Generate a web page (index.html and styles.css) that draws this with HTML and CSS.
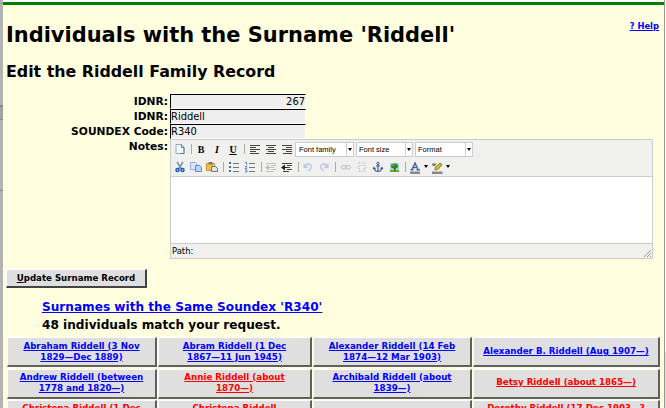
FILE: index.html
```html
<!DOCTYPE html>
<html lang="en">
<head>
<meta charset="utf-8">
<title>Individuals with the Surname 'Riddell'</title>
<link rel="stylesheet" href="styles.css">
</head>
<body>
<div class="edge left"></div>
<main class="page">
<header class="top"><h1>Individuals with the Surname 'Riddell'</h1><a class="help" href="#">? Help</a></header>
<h2>Edit the Riddell Family Record</h2>
<form>
<div class="row"><label>IDNR:</label><span class="field num">267</span></div>
<div class="row"><label>IDNR:</label><span class="field">Riddell</span></div>
<div class="row"><label>SOUNDEX Code:</label><span class="field">R340</span></div>
<div class="row notes"><label>Notes:</label>
<div class="editor">
<div class="bar">
<svg class="i" viewBox="0 0 16 16"><path d="M4 3.500h5.500l2.500 2.500v6.500h-8z" fill="#f8fbff" stroke="#91a9cc"/><path d="M9.500 3.500v3h2.500v6h-4" fill="none" stroke="#5878a8"/></svg>
<i class="sep"></i>
<b class="i fmt">B</b><b class="i fmt it">I</b><b class="i fmt un">U</b>
<i class="sep wide"></i>
<svg class="i" viewBox="0 0 16 16"><path d="M3 4.500h10M3 6.500h6M3 8.500h10M3 10.500h6M3 12.500h9" stroke="#444"/></svg>
<svg class="i" viewBox="0 0 16 16"><path d="M3 4.500h10M5 6.500h6M3 8.500h10M5 10.500h6M3 12.500h10" stroke="#444"/></svg>
<svg class="i" viewBox="0 0 16 16"><path d="M3 4.500h10M7 6.500h6M3 8.500h10M7 10.500h6M4 12.500h9" stroke="#444"/></svg>
<span class="sel s1"><span>Font family</span><i class="arr"></i></span><span class="sel"><span>Font size</span><i class="arr"></i></span><span class="sel"><span>Format</span><i class="arr"></i></span>
</div>
<div class="bar">
<svg class="i" viewBox="0 0 16 16"><path d="M5 3l4.500 7M11 3l-4.500 7" stroke="#7891b4" stroke-width="1.500"/><circle cx="5.500" cy="11" r="1.500" fill="none" stroke="#2457b8" stroke-width="1.500"/><circle cx="10.500" cy="11" r="1.500" fill="none" stroke="#2457b8" stroke-width="1.500"/></svg>
<svg class="i" viewBox="0 0 16 16"><path d="M2.500 3.500h5l2 2v5h-7z" fill="#d8e7fd" stroke="#8eace0"/><path d="M7.500 6.500h4l2 2v4h-6z" fill="#bcd3fa" stroke="#5d89d5"/></svg>
<svg class="i" viewBox="0 0 16 16"><path d="M2.500 4.500h8v7h-8z" fill="#f0c33e" stroke="#c89728"/><path d="M4.500 3h4v2.500h-4z" fill="#777"/><path d="M7.500 7.500h4l2 2v3h-6z" fill="#dce4ee" stroke="#687890"/></svg>
<i class="sep wide"></i>
<svg class="i" viewBox="0 0 16 16"><path d="M3 3h2v2H3zM3 7h2v2H3zM3 11h2v2H3z" fill="#3c6cc0"/><path d="M7 4.500h6M7 8.500h6M7 12.500h6" stroke="#777"/></svg>
<svg class="i" viewBox="0 0 16 16"><path d="M3 3.500h1.500v2.500M3 7.500h2l-2 2h2M3 11h2v2H3" fill="none" stroke="#5c87cd"/><path d="M7 4.500h6M7 8.500h6M7 12.500h6" stroke="#777"/></svg>
<i class="sep"></i>
<svg class="i faint" viewBox="0 0 16 16"><path d="M3 4.500h10M8 6.500h5M8 8.500h3M8 10.500h5M3 12.500h8" stroke="#555"/><path d="M6 5.500v6l-4-3zM5 8h3v1H5z" fill="#555"/></svg>
<svg class="i" viewBox="0 0 16 16"><path d="M3 4.500h10M8 6.500h5M8 8.500h3M8 10.500h5M4 12.500h6" stroke="#444"/><path d="M6 5.500v6l-4-3zM5 8h3v1H5z" fill="#222"/></svg>
<i class="sep"></i>
<svg class="i" viewBox="0 0 16 16"><path d="M5 7c3-4 7-1.500 6 1.500L9 12" fill="none" stroke="#b9c9e5" stroke-width="1.500"/><path d="M3.500 4v5h5z" fill="#b9c9e5"/></svg>
<svg class="i" viewBox="0 0 16 16"><path d="M11 7C8 3 4 5.500 5 8.500L7 12" fill="none" stroke="#b9c9e5" stroke-width="1.500"/><path d="M12.500 4v5h-5z" fill="#b9c9e5"/></svg>
<i class="sep wide"></i>
<svg class="i" viewBox="0 0 16 16"><rect x="3.500" y="6.500" width="5" height="3.500" rx="1.700" fill="none" stroke="#bfc3cb"/><rect x="7.500" y="6.500" width="5" height="3.500" rx="1.700" fill="none" stroke="#bfc3cb"/></svg>
<svg class="i" viewBox="0 0 16 16"><path d="M7 6.500H5q-2 1.800 0 3.500h1M9 6.500h2q2 1.800 0 3.500H9M5 3l1 2M8 2.500v2M11 3l-1 2M5 13l1-2M8 13.500v-2M11 13l-1-2" fill="none" stroke="#c5c8ce"/></svg>
<svg class="i" viewBox="0 0 16 16"><circle cx="8" cy="4.500" r="1.200" fill="none" stroke="#435f91"/><path d="M8 5.500v7M6 7h4M4 9c.5 2.500 2 3.500 4 3.500s3.500-1 4-3.500M3.200 10l.8-1.500 1.500 1.500M10.500 10l1.500-1.500.8 1.500" fill="none" stroke="#435f91" stroke-width="1.200"/></svg>
<svg class="i" viewBox="0 0 16 16"><path d="M4 4h9v8H4z" fill="#a9d4ee"/><path d="M4 11h9v2H4z" fill="#54b530"/><ellipse cx="8.500" cy="7" rx="3.500" ry="2.600" fill="#268a20"/><path d="M6 5.500h3v1.500H6z" fill="#54b530"/><path d="M8 8.500h1.500v3.500H8z" fill="#7b4a1b"/></svg>
<i class="sep"></i>
<svg class="i" viewBox="0 0 16 16"><path d="M5 10.500L8 4l3 6.500M5.500 8.500h5M3.500 10.700h3M9.500 10.700h3.500" fill="none" stroke="#4868a0" stroke-width="1.500"/><path d="M3 12.500h10V15H3z" fill="#888"/></svg><i class="drop"></i>
<svg class="i" viewBox="0 0 16 16"><path d="M3 4.500h4.500L6 7H3.500z" fill="#777"/><path d="M6 8.500L11 4l2 1.500L9.500 10l-3.500 1z" fill="#d8bd22" stroke="#6f6b3c" stroke-width=".8"/><path d="M3 12.500h10.500V15H3z" fill="#888"/></svg><i class="drop"></i>
</div>
<div class="area"></div>
<div class="path"><span>Path:</span><svg class="grip" viewBox="0 0 9 9"><path d="M1 8l7-7M4 8l4-4M7 8l1-1" stroke="#999"/></svg></div>
</div>
</div>
<button type="button"><span><u>U</u>pdate Surname Record</span></button>
</form>
<section class="summary"><a href="#">Surnames with the Same Soundex 'R340'</a><p>48 individuals match your request.</p></section>
<div class="people">
<div><a href="#">Abraham Riddell (3 Nov<br>1829—Dec 1889)</a></div>
<div><a href="#">Abram Riddell (1 Dec<br>1867—11 Jun 1945)</a></div>
<div><a href="#">Alexander Riddell (14 Feb<br>1874—12 Mar 1903)</a></div>
<div><a href="#">Alexander B. Riddell (Aug 1907—)</a></div>
<div><a href="#">Andrew Riddell (between<br>1778 and 1820—)</a></div>
<div><a href="#" class="f">Annie Riddell (about<br>1870—)</a></div>
<div><a href="#">Archibald Riddell (about<br>1839—)</a></div>
<div><a href="#" class="f">Betsy Riddell (about 1865—)</a></div>
<div><a href="#" class="f">Christena Riddell (1 Dec</a></div>
<div><a href="#" class="f">Christena Riddell</a></div>
<div></div>
<div><a href="#" class="f">Dorothy Riddell (17 Dec 1903—?</a></div>
</div>
</main>
<div class="edge right"></div>
</body>
</html>
```
FILE: styles.css
```css
*{box-sizing:border-box}
body{margin:0;width:666px;height:408px;overflow:hidden;display:flex;background:#fff;font:bold 12px/15px "DejaVu Sans",sans-serif;color:#000}
.edge{height:408px;background:#b3b3b3}
.left{width:3px;background:linear-gradient(#b3b3b3 0 3px,#999 3px 4px,#b3b3b3 4px 105px,#888 105px 107px,#a3a3a3 107px 119px,#888 119px 120px,#b3b3b3 120px 190px,#888 190px 191px,#b3b3b3 191px)}
.right{width:2px;border-left:1px solid #999;background:linear-gradient(#fff 0 352px,#ddd 352px)}
.page{width:661px;height:406px;margin-top:2px;border-top:3px solid green;background:#ffffe0;padding-left:3px;overflow:hidden}
a{color:#00f}
.top{display:flex;justify-content:space-between;height:51px;padding:15px 5px 0 0}
h1{margin:0;font-size:20.95px;line-height:30px;white-space:nowrap}
.help{font-size:8.4px;line-height:15px;margin-top:-1px}
h2{margin:6px 0 0;font-size:15.85px;line-height:20px;height:32px}
.row{display:flex;height:15px}
label{width:162px;text-align:right;margin-right:2px;font-size:10.7px}
.field{width:136px;height:15px;background:#efefef;border:1px solid;border-color:#000 #fff #fff #000;font:11px/14px "DejaVu Sans Condensed","DejaVu Sans",sans-serif}
.num{text-align:right}
.notes{height:120px}
.editor{width:483px;height:120px;border:1px solid #ccc;background:#f0f0ee;display:flex;flex-direction:column}
.bar{display:flex;height:18px;padding-left:1px;align-items:center}
.bar+.bar{height:19px;padding-bottom:1px;border-bottom:1px solid #ccc}
.i{width:16px;height:16px;flex:none;display:block}
.faint{opacity:.3}
.fmt{font:bold 10px/17px "Liberation Serif",serif;text-align:center}
.it{font-style:italic}
.un{text-decoration:underline}
.sep{width:5px;height:10px;flex:none;background:linear-gradient(90deg,transparent 3px,#aaa 3px 4px,transparent 4px)}
.wide{width:6px}
.sel{width:57px;height:15px;margin-left:2px;border:1px solid #ccc;background:#fff;display:flex;font:7.5px/13px "Liberation Sans",sans-serif;padding-left:2px;justify-content:space-between;white-space:nowrap}
.s1{width:59px;margin-left:0;padding-left:3px}
.sel:last-child{width:58px}
.arr{width:7px;border-left:1px solid #ccc;padding:5px 0 0 .5px}
.arr:before,.drop:before{content:"";display:block;width:0;border:solid transparent;border-width:3px 2.5px 0;border-top-color:#000}
.drop{width:6px;padding-left:1px}
.area{height:67px;background:#fff;border-bottom:1px solid #ccc;flex:none}
.path{height:14px;display:flex;justify-content:space-between;font:9.4px/14px "DejaVu Sans Condensed","DejaVu Sans",sans-serif;padding-left:1px}
.grip{width:9px;height:9px;margin-top:5px}
button{display:block;width:141px;height:19px;margin:10px 0 0;padding:0;border:solid;border-width:1px 2px 2px 1px;border-color:#fff #444 #444 #fff;background:#dfdfdf;color:#000;font:bold 8.65px/16px "DejaVu Sans",sans-serif}
.summary{padding:10px 0 0 36px;font-size:12.12px;line-height:18px;height:49px}
.summary p{margin:0}
.people{margin-left:1px;display:grid;grid-template-columns:150px 154px 159px 187px;grid-auto-rows:30px;gap:1.5px 1px;font-size:8.7px;line-height:11px;text-align:center}
.people div{background:#dfdfdf;border:solid;border-width:1px 2px 2px 1px;border-color:#fff #606060 #606060 #fff;display:flex;align-items:center;justify-content:center;white-space:nowrap}
.people div:nth-child(n+5){padding-bottom:1px}
.people div:nth-child(n+9){align-items:flex-start;padding-top:2px}
.f{color:#f00}
```
